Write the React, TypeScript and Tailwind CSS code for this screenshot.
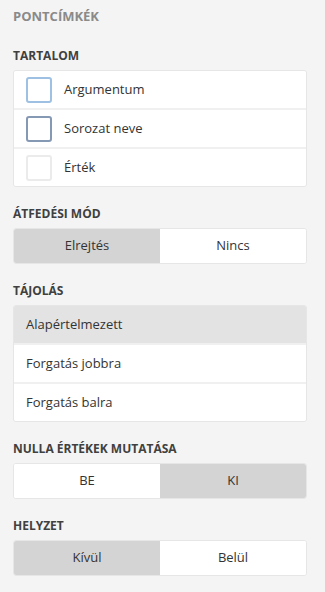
import { useState } from "react";

const checkColors = ["border-[#9ec0e3]", "border-[#8598b4]", "border-[#ebebeb]"];

function Header({ children }: { children: string }) {
  return (
    <div className="mb-[6px] h-4 text-[12px] font-bold uppercase leading-4 text-[#404040]">
      {children}
    </div>
  );
}

function Toggle({ options, active }: { options: string[]; active: number }) {
  const [sel, setSel] = useState(active);
  return (
    <div className="flex h-9 overflow-hidden rounded-[3px] border border-[#e6e6e6] bg-white">
      {options.map((o, i) => (
        <button
          key={o}
          onClick={() => setSel(i)}
          className={`flex flex-1 items-center justify-center text-[13px] text-[#333] ${
            sel === i ? "bg-[#d4d4d4]" : "bg-white"
          }`}
        >
          {o}
        </button>
      ))}
    </div>
  );
}

export default function App() {
  const [orient, setOrient] = useState(0);
  return (
    <div className="h-[592px] w-[325px] bg-[#f4f4f4] pl-[13px] pr-[18px] font-['Open_Sans',sans-serif] text-[#333]">
      <div className="pt-[8px] text-[13px] font-bold leading-4 text-[#8a8a8a]">PONTCÍMKÉK</div>

      <div className="pt-[24px]">
        <Header>Tartalom</Header>
        <div className="flex flex-col gap-[2px] overflow-hidden rounded-[3px] border border-[#e6e6e6] bg-[#f0f0f0]">
          {["Argumentum", "Sorozat neve", "Érték"].map((t, i) => (
            <div key={t} className="flex h-[37px] items-center gap-[12px] bg-white pl-3">
              <span className={`h-[26px] w-[26px] rounded-[3px] border-2 bg-white ${checkColors[i]}`} />
              <span className="text-[13px]">{t}</span>
            </div>
          ))}
        </div>
      </div>

      <div className="pt-[19px]">
        <Header>Átfedési mód</Header>
        <Toggle options={["Elrejtés", "Nincs"]} active={0} />
      </div>

      <div className="pt-[19px]">
        <Header>Tájolás</Header>
        <div className="flex flex-col gap-[2px] overflow-hidden rounded-[3px] border border-[#e6e6e6] bg-[#f0f0f0]">
          {["Alapértelmezett", "Forgatás jobbra", "Forgatás balra"].map((t, i) => (
            <div
              key={t}
              onClick={() => setOrient(i)}
              className={`flex h-[37px] items-center pl-3 text-[13px] ${orient === i ? "bg-[#e3e3e3]" : "bg-white"}`}
            >
              {t}
            </div>
          ))}
        </div>
      </div>

      <div className="pt-[19px]">
        <Header>Nulla értékek mutatása</Header>
        <Toggle options={["BE", "KI"]} active={1} />
      </div>

      <div className="pt-[19px]">
        <Header>Helyzet</Header>
        <Toggle options={["Kívül", "Belül"]} active={0} />
      </div>
    </div>
  );
}
